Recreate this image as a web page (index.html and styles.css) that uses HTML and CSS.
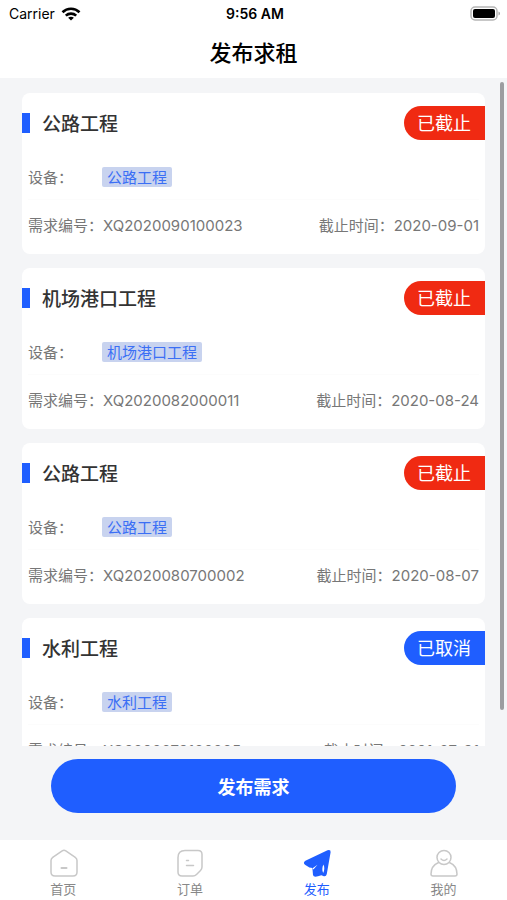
FILE: index.html
```html
<!DOCTYPE html>
<html lang="zh-CN">
<head>
    <meta charset="UTF-8">
    <meta name="viewport" content="width=device-width, initial-scale=1.0">
    <title>发布求租</title>
    <link rel="stylesheet" href="styles.css">
</head>
<body>
    <header class="header">
        <div class="status-bar">
            <div class="carrier">
                <span>Carrier</span>
                <svg width="20" height="14" viewBox="0 0 20 14" fill="none" stroke="#000" stroke-width="2.6">
                    <path d="M1.5 5.2 C6.2 0.6 13.8 0.6 18.5 5.2"/>
                    <path d="M4.8 8.6 C7.7 5.9 12.3 5.9 15.2 8.6"/>
                    <path d="M10 13.6 L7.1 10.8 C8.7 9.4 11.3 9.4 12.9 10.8 Z" fill="#000" stroke="none"/>
                </svg>
            </div>
            <time class="clock">9:56 AM</time>
            <div class="battery">
                <svg width="31" height="15" viewBox="0 0 31 15">
                    <rect x="1" y="1" width="26" height="13" rx="4" fill="#fff" stroke="#b5b5b5" stroke-width="1.5"/>
                    <rect x="3" y="3" width="22" height="9" rx="2" fill="#000"/>
                    <path d="M28.5 5.5 C30.5 6.2 30.5 8.8 28.5 9.5 Z" fill="#a5a5a5"/>
                </svg>
            </div>
        </div>
        <h1 class="title">发布求租</h1>
    </header>

    <main class="list">
        <article class="card">
            <div class="card-head">
                <h2>公路工程</h2>
                <span class="badge">已截止</span>
            </div>
            <div class="device">
                <span class="label">设备：</span>
                <span class="tag">公路工程</span>
            </div>
            <div class="info">
                <span>需求编号：XQ2020090100023</span>
                <span>截止时间：2020-09-01</span>
            </div>
        </article>
        <article class="card">
            <div class="card-head">
                <h2>机场港口工程</h2>
                <span class="badge">已截止</span>
            </div>
            <div class="device">
                <span class="label">设备：</span>
                <span class="tag">机场港口工程</span>
            </div>
            <div class="info">
                <span>需求编号：XQ2020082000011</span>
                <span>截止时间：2020-08-24</span>
            </div>
        </article>
        <article class="card">
            <div class="card-head">
                <h2>公路工程</h2>
                <span class="badge">已截止</span>
            </div>
            <div class="device">
                <span class="label">设备：</span>
                <span class="tag">公路工程</span>
            </div>
            <div class="info">
                <span>需求编号：XQ2020080700002</span>
                <span>截止时间：2020-08-07</span>
            </div>
        </article>
        <article class="card">
            <div class="card-head">
                <h2>水利工程</h2>
                <span class="badge badge-cancel">已取消</span>
            </div>
            <div class="device">
                <span class="label">设备：</span>
                <span class="tag">水利工程</span>
            </div>
            <div class="info">
                <span>需求编号：XQ2020073100005</span>
                <span>截止时间：2021-07-31</span>
            </div>
        </article>
        <div class="scrollbar"></div>
    </main>

    <div class="action">
        <button type="button" class="btn-publish">发布需求</button>
    </div>

    <nav class="tab-bar">
        <a href="#home">
            <svg width="30" height="30" viewBox="0 0 30 30" fill="none" stroke="#c8c8c8" stroke-width="1.5" stroke-linecap="round" stroke-linejoin="round">
                <path d="M14.2 2.8 Q16 1.6 17.8 2.8 L27.3 9.4 Q29 10.6 29 12.6 V24 Q29 28 25 28 H7 Q3 28 3 24 V12.6 Q3 10.6 4.7 9.4 Z"/>
                <path d="M13.5 20 H18.5" stroke-width="2"/>
            </svg>
            首页
        </a>
        <a href="#orders">
            <svg width="30" height="30" viewBox="0 0 30 30" fill="none" stroke="#c8c8c8" stroke-width="1.5" stroke-linecap="round" stroke-linejoin="round">
                <path d="M10 2.5 H23 Q27 2.5 27 6.5 V19 Q27 21 25.5 22.5 L21.5 26.5 Q20 28 18 28 H7 Q3 28 3 24 V9.5 Q3 2.5 10 2.5 Z"/>
                <path d="M11.5 12.5 H13.5 M11.5 17.5 H18.5"/>
            </svg>
            订单
        </a>
        <a href="#publish" class="active">
            <svg width="30" height="30" viewBox="0 0 30 30" fill="#1f5eff">
                <path d="M25.5 2.2 Q28.9 1.1 28.6 4.3 L24.8 26 Q24.2 28.8 21.8 28.2 L19.4 27.2 L16 28.3 Q11.4 29.4 11 27 L10.4 20 L7.4 19.4 L3 16.8 Q0.6 14.8 3.4 12.8 Z"/>
                <path d="M21.4 16.5 C20 19.5 20 22.5 21.2 25 C22.5 22.5 22.8 19 21.4 16.5 Z M10.6 20.2 L15.5 16.8 L11.4 21.6 Z" fill="#fff"/>
            </svg>
            发布
        </a>
        <a href="#mine">
            <svg width="30" height="30" viewBox="0 0 30 30" fill="none" stroke="#c8c8c8" stroke-width="1.5" stroke-linecap="round" stroke-linejoin="round">
                <circle cx="15" cy="9.5" r="7"/>
                <path d="M12 11 Q15 14 18 11"/>
                <path d="M9.6 14.5 C5 16.5 2 21 2 26 Q2 28 4 28 H26 Q28 28 28 26 C28 21 25 16.5 20.4 14.5"/>
            </svg>
            我的
        </a>
    </nav>
</body>
</html>
```
FILE: styles.css
```css
* {
    margin: 0;
    padding: 0;
    box-sizing: border-box;
}

body {
    font-family: 'Inter', 'Noto Sans CJK SC', sans-serif;
    background: #f4f5f7;
    color: #333;
    height: 100vh;
    display: flex;
    flex-direction: column;
    overflow: hidden;
}

.header {
    background: #fff;
    color: #000;
}

.status-bar {
    display: grid;
    grid-template-columns: 1fr auto 1fr;
    align-items: center;
    height: 27px;
    padding: 0 6px 0 9px;
    font-size: 14px;
}

.carrier {
    display: flex;
    align-items: center;
    gap: 6px;
}

.clock {
    font-weight: 600;
}

.battery {
    display: flex;
    justify-content: flex-end;
}

.title {
    height: 51px;
    line-height: 52px;
    font-size: 22px;
    font-weight: 500;
    text-align: center;
}

.list {
    position: relative;
    flex: 1;
    min-height: 0;
    overflow: hidden;
    display: flex;
    flex-direction: column;
    gap: 14px;
    padding: 15px 22px 0;
}

.card {
    flex-shrink: 0;
    background: #fff;
    border-radius: 8px;
    padding: 13px 0 6px;
}

.card-head {
    display: flex;
    align-items: center;
    justify-content: space-between;
    margin-bottom: 14px;
}

.card-head h2 {
    height: 20px;
    border-left: 8px solid #1f5eff;
    padding-left: 12px;
    font-size: 19px;
    line-height: 24px;
    font-weight: 500;
}

.badge {
    height: 34px;
    line-height: 36px;
    padding: 0 14px 0 13px;
    border-radius: 17px 0 0 17px;
    background: #f02a12;
    color: #fff;
    font-size: 18px;
}

.badge-cancel {
    background: #1f5eff;
}

.device {
    display: flex;
    align-items: center;
    height: 46px;
    margin: 0 6px;
    border-bottom: 1px solid #fcfcfc;
    font-size: 15px;
}

.label {
    width: 74px;
    color: #777;
}

.tag {
    height: 20px;
    padding: 0 5px;
    border-radius: 2px;
    background: #c8d3ef;
    color: #3b6ff5;
    line-height: 22px;
}

.info {
    display: flex;
    align-items: center;
    justify-content: space-between;
    height: 48px;
    padding: 0 6px;
    font-size: 15px;
    color: #777;
}

.scrollbar {
    position: absolute;
    top: 4px;
    right: 3px;
    width: 4px;
    height: 94%;
    border-radius: 2px;
    background: #9c9da0;
}

.action {
    padding: 13px 51px 27px;
}

.btn-publish {
    display: block;
    width: 100%;
    height: 54px;
    border: none;
    border-radius: 27px;
    background: #1f5eff;
    color: #fff;
    font-family: inherit;
    font-size: 18px;
    font-weight: 600;
    cursor: pointer;
}

.tab-bar {
    display: flex;
    background: #fff;
}

.tab-bar a {
    flex: 1;
    display: flex;
    flex-direction: column;
    align-items: center;
    padding-top: 8px;
    font-size: 13px;
    line-height: 22px;
    color: #888;
    text-decoration: none;
}

.tab-bar svg {
    flex-shrink: 0;
}

.tab-bar a.active {
    color: #1f5eff;
}
```
